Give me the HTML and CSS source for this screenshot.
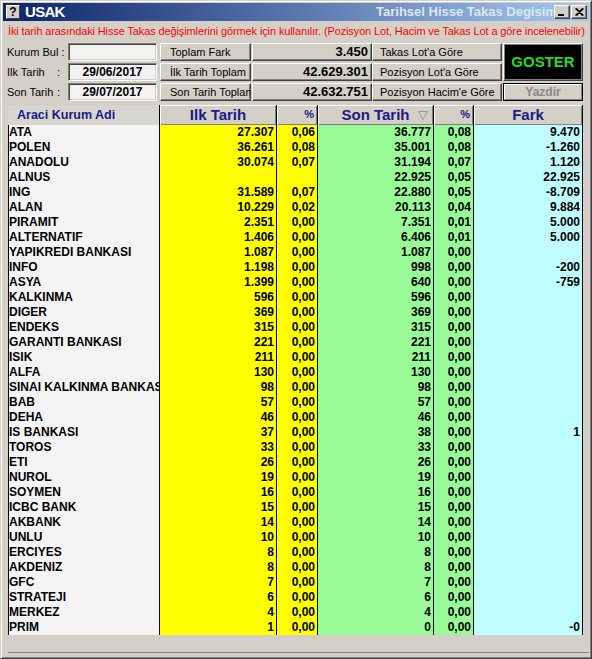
FILE: index.html
```html
<!DOCTYPE html>
<html>
<head>
<meta charset="utf-8">
<link rel="stylesheet" href="styles.css">
</head>
<body>
<div class="win">
  <div class="title">
    <span class="ticon">?</span>
    <span class="tname">USAK</span>
    <span class="tright">Tarihsel Hisse Takas Degisimi</span>
    <span class="tbtns">
      <span class="tbtn"><svg width="8" height="7" viewBox="0 0 8 7"><rect x="0" y="5" width="6" height="2" fill="#000"/></svg></span>
      <span class="tbtn"><svg width="9" height="8" viewBox="0 0 9 8"><path d="M0.5 0.5 L7.5 7.5 M1.5 0.5 L8.5 7.5 M7.5 0.5 L0.5 7.5 M8.5 0.5 L1.5 7.5" stroke="#000" stroke-width="1.1" fill="none"/></svg></span>
    </span>
  </div>
  <div class="hint">İki tarih arasındaki Hisse Takas değişimlerini görmek için kullanılır. (Pozisyon Lot, Hacim ve Takas Lot a göre incelenebilir)</div>
  <div class="controls">
    <div class="lbl">Kurum Bul :</div>
    <div class="inp"></div>
    <div class="btn">Toplam Fark</div>
    <div class="val">3.450</div>
    <div class="btn wide">Takas Lot'a Göre</div>
    <div class="goster">GOSTER</div>

    <div class="lbl"><span class="lt">Ilk Tarih</span>:</div>
    <div class="inp">29/06/2017</div>
    <div class="btn">İlk Tarih Toplam</div>
    <div class="val">42.629.301</div>
    <div class="btn wide">Pozisyon Lot'a Göre</div>

    <div class="lbl"><span class="lt">Son Tarih</span>:</div>
    <div class="inp">29/07/2017</div>
    <div class="btn">Son Tarih Toplam</div>
    <div class="val">42.632.751</div>
    <div class="btn wide">Pozisyon Hacim'e Göre</div>
    <div class="yazdir"><span>Yazdir</span></div>
  </div>
  <div class="gridwrap">
    <div class="hrow">
      <div class="h hn">Araci Kurum Adi</div>
      <div class="h hb big">Ilk Tarih</div>
      <div class="h hb pct">%</div>
      <div class="h hb big sort">Son Tarih<svg class="tri" width="10" height="9" viewBox="0 0 10 9"><path d="M0.5 0.5 L9.5 0.5 L5 8.5 Z" fill="none" stroke="#9a9a9a" stroke-width="1"/></svg></div>
      <div class="h hb pct">%</div>
      <div class="h hb big">Fark</div>
    </div>
    <div class="r"><div class="c n">ATA</div><div class="c y">27.307</div><div class="c y">0,06</div><div class="c g">36.777</div><div class="c g">0,08</div><div class="c f">9.470</div></div>
    <div class="r"><div class="c n">POLEN</div><div class="c y">36.261</div><div class="c y">0,08</div><div class="c g">35.001</div><div class="c g">0,08</div><div class="c f">-1.260</div></div>
    <div class="r"><div class="c n">ANADOLU</div><div class="c y">30.074</div><div class="c y">0,07</div><div class="c g">31.194</div><div class="c g">0,07</div><div class="c f">1.120</div></div>
    <div class="r"><div class="c n">ALNUS</div><div class="c y"></div><div class="c y"></div><div class="c g">22.925</div><div class="c g">0,05</div><div class="c f">22.925</div></div>
    <div class="r"><div class="c n">ING</div><div class="c y">31.589</div><div class="c y">0,07</div><div class="c g">22.880</div><div class="c g">0,05</div><div class="c f">-8.709</div></div>
    <div class="r"><div class="c n">ALAN</div><div class="c y">10.229</div><div class="c y">0,02</div><div class="c g">20.113</div><div class="c g">0,04</div><div class="c f">9.884</div></div>
    <div class="r"><div class="c n">PIRAMIT</div><div class="c y">2.351</div><div class="c y">0,00</div><div class="c g">7.351</div><div class="c g">0,01</div><div class="c f">5.000</div></div>
    <div class="r"><div class="c n">ALTERNATIF</div><div class="c y">1.406</div><div class="c y">0,00</div><div class="c g">6.406</div><div class="c g">0,01</div><div class="c f">5.000</div></div>
    <div class="r"><div class="c n">YAPIKREDI BANKASI</div><div class="c y">1.087</div><div class="c y">0,00</div><div class="c g">1.087</div><div class="c g">0,00</div><div class="c f"></div></div>
    <div class="r"><div class="c n">INFO</div><div class="c y">1.198</div><div class="c y">0,00</div><div class="c g">998</div><div class="c g">0,00</div><div class="c f">-200</div></div>
    <div class="r"><div class="c n">ASYA</div><div class="c y">1.399</div><div class="c y">0,00</div><div class="c g">640</div><div class="c g">0,00</div><div class="c f">-759</div></div>
    <div class="r"><div class="c n">KALKINMA</div><div class="c y">596</div><div class="c y">0,00</div><div class="c g">596</div><div class="c g">0,00</div><div class="c f"></div></div>
    <div class="r"><div class="c n">DIGER</div><div class="c y">369</div><div class="c y">0,00</div><div class="c g">369</div><div class="c g">0,00</div><div class="c f"></div></div>
    <div class="r"><div class="c n">ENDEKS</div><div class="c y">315</div><div class="c y">0,00</div><div class="c g">315</div><div class="c g">0,00</div><div class="c f"></div></div>
    <div class="r"><div class="c n">GARANTI BANKASI</div><div class="c y">221</div><div class="c y">0,00</div><div class="c g">221</div><div class="c g">0,00</div><div class="c f"></div></div>
    <div class="r"><div class="c n">ISIK</div><div class="c y">211</div><div class="c y">0,00</div><div class="c g">211</div><div class="c g">0,00</div><div class="c f"></div></div>
    <div class="r"><div class="c n">ALFA</div><div class="c y">130</div><div class="c y">0,00</div><div class="c g">130</div><div class="c g">0,00</div><div class="c f"></div></div>
    <div class="r"><div class="c n">SINAI KALKINMA BANKASI</div><div class="c y">98</div><div class="c y">0,00</div><div class="c g">98</div><div class="c g">0,00</div><div class="c f"></div></div>
    <div class="r"><div class="c n">BAB</div><div class="c y">57</div><div class="c y">0,00</div><div class="c g">57</div><div class="c g">0,00</div><div class="c f"></div></div>
    <div class="r"><div class="c n">DEHA</div><div class="c y">46</div><div class="c y">0,00</div><div class="c g">46</div><div class="c g">0,00</div><div class="c f"></div></div>
    <div class="r"><div class="c n">IS BANKASI</div><div class="c y">37</div><div class="c y">0,00</div><div class="c g">38</div><div class="c g">0,00</div><div class="c f">1</div></div>
    <div class="r"><div class="c n">TOROS</div><div class="c y">33</div><div class="c y">0,00</div><div class="c g">33</div><div class="c g">0,00</div><div class="c f"></div></div>
    <div class="r"><div class="c n">ETI</div><div class="c y">26</div><div class="c y">0,00</div><div class="c g">26</div><div class="c g">0,00</div><div class="c f"></div></div>
    <div class="r"><div class="c n">NUROL</div><div class="c y">19</div><div class="c y">0,00</div><div class="c g">19</div><div class="c g">0,00</div><div class="c f"></div></div>
    <div class="r"><div class="c n">SOYMEN</div><div class="c y">16</div><div class="c y">0,00</div><div class="c g">16</div><div class="c g">0,00</div><div class="c f"></div></div>
    <div class="r"><div class="c n">ICBC BANK</div><div class="c y">15</div><div class="c y">0,00</div><div class="c g">15</div><div class="c g">0,00</div><div class="c f"></div></div>
    <div class="r"><div class="c n">AKBANK</div><div class="c y">14</div><div class="c y">0,00</div><div class="c g">14</div><div class="c g">0,00</div><div class="c f"></div></div>
    <div class="r"><div class="c n">UNLU</div><div class="c y">10</div><div class="c y">0,00</div><div class="c g">10</div><div class="c g">0,00</div><div class="c f"></div></div>
    <div class="r"><div class="c n">ERCIYES</div><div class="c y">8</div><div class="c y">0,00</div><div class="c g">8</div><div class="c g">0,00</div><div class="c f"></div></div>
    <div class="r"><div class="c n">AKDENIZ</div><div class="c y">8</div><div class="c y">0,00</div><div class="c g">8</div><div class="c g">0,00</div><div class="c f"></div></div>
    <div class="r"><div class="c n">GFC</div><div class="c y">7</div><div class="c y">0,00</div><div class="c g">7</div><div class="c g">0,00</div><div class="c f"></div></div>
    <div class="r"><div class="c n">STRATEJI</div><div class="c y">6</div><div class="c y">0,00</div><div class="c g">6</div><div class="c g">0,00</div><div class="c f"></div></div>
    <div class="r"><div class="c n">MERKEZ</div><div class="c y">4</div><div class="c y">0,00</div><div class="c g">4</div><div class="c g">0,00</div><div class="c f"></div></div>
    <div class="r"><div class="c n">PRIM</div><div class="c y">1</div><div class="c y">0,00</div><div class="c g">0</div><div class="c g">0,00</div><div class="c f">-0</div></div>
  </div>
</div>
</body>
</html>
```
FILE: styles.css
```css
html, body {
  margin: 0;
  padding: 0;
  background: #d4d0c8;
}
.win {
  width: 592px;
  height: 659px;
  box-sizing: border-box;
  background: #d4d0c8;
  border: 1px solid;
  border-color: #d4d0c8 #404040 #404040 #d4d0c8;
  box-shadow: inset 1px 1px #ffffff, inset -1px -1px #808080;
  padding: 2px;
  display: flex;
  flex-direction: column;
  font-family: "Liberation Sans", Arial, sans-serif;
  overflow: hidden;
}
.title {
  height: 18px;
  flex: 0 0 18px;
  display: flex;
  align-items: center;
  background: linear-gradient(to right, #0a246a, #a6caf0);
}
.ticon {
  width: 14px;
  height: 14px;
  margin-left: 3px;
  box-sizing: border-box;
  background: #d4d0c8;
  border: 1px solid #404040;
  border-top-color: #ffffff;
  border-left-color: #ffffff;
  font: bold 12px/12px "Liberation Sans", Arial, sans-serif;
  color: #000;
  text-align: center;
}
.tname {
  margin-left: 5px;
  color: #ffffff;
  font: bold 15px/18px "Liberation Sans", Arial, sans-serif;
  letter-spacing: -0.7px;
}
.tright {
  margin-left: auto;
  width: 177px;
  overflow: hidden;
  white-space: nowrap;
  color: #dfe6ee;
  font: bold 13px/18px "Liberation Sans", Arial, sans-serif;
}
.tbtns {
  display: flex;
  margin-right: 2px;
}
.tbtn {
  width: 16px;
  height: 14px;
  box-sizing: border-box;
  background: #d4d0c8;
  border: 1px solid;
  border-color: #ffffff #404040 #404040 #ffffff;
  box-shadow: inset -1px -1px #808080;
  display: flex;
  align-items: center;
  justify-content: center;
  margin-left: 1px;
}
.hint {
  height: 20px;
  flex: 0 0 20px;
  line-height: 20px;
  padding-left: 5px;
  color: #ff0000;
  font-size: 11px;
  white-space: nowrap;
  overflow: hidden;
  letter-spacing: -0.12px;
}
.controls {
  margin-top: 2px;
  margin-left: 4px;
  display: grid;
  grid-template-columns: 61px 92px 92px 120px 131px 80px;
  grid-template-rows: 18px 18px 18px;
  row-gap: 2px;
  font-size: 11px;
}
.lbl {
  line-height: 18px;
  color: #000;
  white-space: nowrap;
  display: flex;
}
.lt {
  width: 50px;
}
.inp {
  width: 89px;
  box-sizing: border-box;
  background: #f2f2f2;
  border: 1px solid;
  border-color: #808080 #ffffff #ffffff #808080;
  box-shadow: inset 1px 1px #404040, inset -1px -1px #d4d0c8;
  font: bold 12px/16px "Liberation Sans", Arial, sans-serif;
  text-align: center;
  color: #000;
}
.btn, .val {
  box-sizing: border-box;
  background: #d4d0c8;
  border: 1px solid;
  border-color: #ffffff #404040 #404040 #ffffff;
  box-shadow: inset -1px -1px #808080;
  white-space: nowrap;
  overflow: hidden;
  color: #000;
}
.btn {
  width: 91px;
  padding-left: 9px;
  line-height: 16px;
}
.btn.wide {
  width: 130px;
  padding-left: 7px;
}
.val {
  width: 120px;
  text-align: right;
  padding-right: 3px;
  font: bold 13px/16px "Liberation Sans", Arial, sans-serif;
}
.goster {
  grid-column: 6;
  grid-row: 1 / span 2;
  box-sizing: border-box;
  background: #000;
  border: 1px solid;
  border-color: #ffffff #404040 #404040 #ffffff;
  box-shadow: inset -1px -1px #808080, inset 1px 1px #808080;
  color: #22dd22;
  font: bold 15px/36px "Liberation Sans", Arial, sans-serif;
  text-align: center;
}
.yazdir {
  grid-column: 6;
  grid-row: 3;
  box-sizing: border-box;
  border: 1px solid #000;
  display: flex;
}
.yazdir span {
  flex: 1;
  background: #d4d0c8;
  border: 1px solid;
  border-color: #ffffff #808080 #808080 #ffffff;
  color: #8a8a8a;
  font: bold 12px/14px "Liberation Sans", Arial, sans-serif;
  text-align: center;
}
.gridwrap {
  flex: 1;
  margin: 4px 0 3px 5px;
  background: #d4d0c8;
  border-bottom: 1px solid #808080;
}
.hrow, .r {
  display: grid;
  grid-template-columns: 152px 117px 41px 116px 40px 109px;
}
.hrow {
  height: 20px;
}
.h {
  box-sizing: border-box;
  border-right: 1px solid #000;
  color: #1a1a88;
  font-weight: bold;
  white-space: nowrap;
  overflow: hidden;
}
.hn {
  font-size: 12.5px;
  line-height: 20px;
  padding-left: 9px;
  background: #d8d6d0;
}
.hb {
  background: #d4d0c8;
  box-shadow: inset 1px 1px #ffffff, inset -1px -1px #808080;
  text-align: center;
}
.big {
  font-size: 15px;
  line-height: 20px;
}
.pct {
  font-size: 11px;
  line-height: 18px;
  text-align: right;
  padding-right: 3px;
}
.sort {
  position: relative;
}
.tri {
  position: absolute;
  right: 5px;
  top: 6px;
}
.r {
  height: 15px;
}
.c {
  box-sizing: border-box;
  border-right: 1px solid #000;
  font-weight: bold;
  font-size: 12px;
  line-height: 15px;
  color: #000;
  white-space: nowrap;
  overflow: hidden;
  text-align: right;
  padding-right: 2px;
}
.c.n {
  border-left: 1px solid #000;
  background: #f4f4f4;
  text-align: left;
  padding: 0;
}
.c.y { background: #ffff00; }
.c.g { background: #98fb98; }
.c.f { background: #c0ffff; }
```
